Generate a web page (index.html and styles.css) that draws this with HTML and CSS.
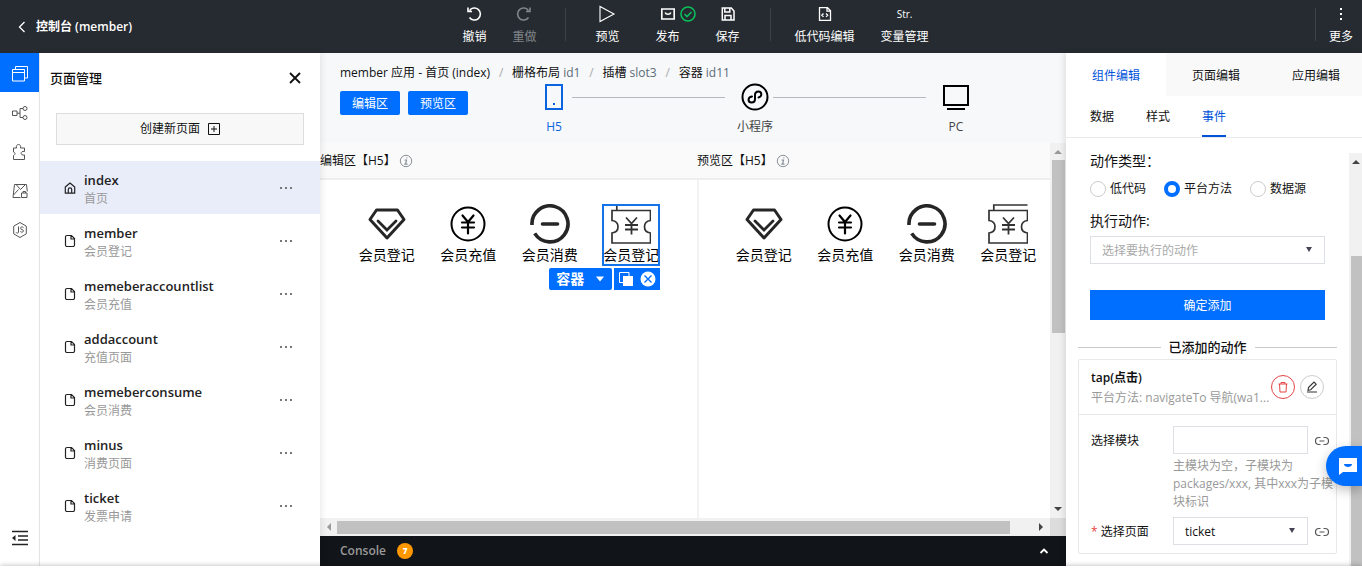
FILE: index.html
```html
<!DOCTYPE html>
<html lang="zh-CN">
<head>
<meta charset="utf-8">
<title>控制台 (member)</title>
<link rel="stylesheet" href="styles.css">
</head>
<body>
<svg class="defs" aria-hidden="true">
  <symbol id="i-file" viewBox="0 0 12 14"><path d="M7.500 1.500H3a1.500 1.500 0 0 0-1.500 1.500v8A1.500 1.500 0 0 0 3 12.500h6a1.500 1.500 0 0 0 1.500-1.500V4.500zM7 1.500V5h3.500" fill="none" stroke="currentColor" stroke-width="1.200"/></symbol>
  <symbol id="i-info" viewBox="0 0 14 14"><circle cx="7" cy="7" r="5.700" fill="none" stroke="currentColor"/><path d="M7.800 3.800h.1M6 6h1.500l-.9 4M5.700 10.200h2.400" fill="none" stroke="currentColor" stroke-width="1.200" stroke-linecap="round"/></symbol>
  <symbol id="i-link" viewBox="0 0 16 12"><path d="M6.500 2.500H5a3.500 3.500 0 0 0 0 7h1.500M9.500 2.500H11a3.500 3.500 0 0 1 0 7H9.500M5.500 6h5" fill="none" stroke="currentColor" stroke-width="1.200"/></symbol>
  <symbol id="i-diamond" viewBox="0 0 40 40"><path d="M9.500 6h21l6.500 9.500L20 34 3 15.500z" fill="none" stroke="#262626" stroke-width="3" stroke-linejoin="round"/><path d="M11 17l9 9 9-9" fill="none" stroke="#262626" stroke-width="2.800" stroke-linecap="round"/></symbol>
  <symbol id="i-coin" viewBox="0 0 40 40"><circle cx="20" cy="20" r="16.500" fill="none" stroke="#000" stroke-width="2"/><path d="M14.500 11.500l5.500 6.500 5.500-6.500M20 18v11.500M14 18.500h12M14 23.500h12" fill="none" stroke="#000" stroke-width="2.200" stroke-linecap="round"/></symbol>
  <symbol id="i-minus" viewBox="0 0 40 40"><path d="M2 21A18 18 0 1 1 4.700 29.400" fill="none" stroke="#262626" stroke-width="3.600"/><path d="M12.500 20h15" stroke="#262626" stroke-width="3.600" stroke-linecap="round"/></symbol>
  <symbol id="i-ticket" viewBox="0 0 40 40"><path d="M5.800 6V1H39.500M1 6.500h38.500v10c-8 1-8 11.500 0 12.500v10H1V29c8-1 8-11.500 0-12.500z" fill="none" stroke="#333" stroke-width="1.700"/><path d="M15 13.500l5.500 6 5.500-6M20.500 19.500v11M14 21h13M14 25.500h13" fill="none" stroke="#333" stroke-width="1.800"/></symbol>
</svg>

<header class="topbar">
  <a class="brand" href="#"><svg width="8" height="12" viewBox="0 0 8 12"><path d="M6.500 1l-5 5 5 5" fill="none" stroke="currentColor" stroke-width="1.300"/></svg>控制台 (member)</a>
  <nav class="tools">
    <div class="tool-group">
      <button class="tool"><svg width="16" height="16" viewBox="0 0 16 16"><path d="M3.600 4.400A6 6 0 1 1 3.500 11.500M2 1.500v4h4" fill="none" stroke="currentColor" stroke-width="1.600"/></svg>撤销</button>
      <button class="tool tool-off" disabled><svg width="16" height="16" viewBox="0 0 16 16"><path d="M12.400 4.400A6 6 0 1 0 12.500 11.500M14 1.500v4h-4" fill="none" stroke="currentColor" stroke-width="1.600"/></svg>重做</button>
    </div>
    <span class="rule"></span>
    <div class="tool-group wide">
      <button class="tool"><svg width="18" height="18" viewBox="0 0 18 18"><path d="M2 1.500v15l14-7.500z" fill="none" stroke="currentColor" stroke-width="1.100"/></svg>预览</button>
      <button class="tool"><svg width="16" height="16" viewBox="0 0 16 16"><path d="M1.800 3h12.400v10H1.800zM5.200 6.500c.8 2.300 4.800 2.300 5.600 0" fill="none" stroke="currentColor" stroke-width="1.600"/></svg>发布
        <svg class="ok" width="16" height="16" viewBox="0 0 16 16"><circle cx="8" cy="8" r="7" fill="none" stroke="#0abf5b" stroke-width="1.600"/><path d="M4.500 8l2.500 2.500L11.500 6" fill="none" stroke="#0abf5b" stroke-width="1.600"/></svg></button>
      <button class="tool"><svg width="16" height="16" viewBox="0 0 16 16"><path d="M2.300 2h9l2.700 3v9H2.300zM4.800 2v4h5V2M5 14V9.500h6V14" fill="none" stroke="currentColor" stroke-width="1.500"/></svg>保存</button>
    </div>
    <span class="rule"></span>
    <div class="tool-group">
      <button class="tool"><svg width="16" height="16" viewBox="0 0 16 16"><path d="M2.500 1.700h8l3 3v9.600h-11zM10 1.700v3.500h3.500M6.500 7.500L4.800 9.200l1.700 1.700M9 7.500l1.700 1.700L9 10.900" fill="none" stroke="currentColor" stroke-width="1.300"/></svg>低代码编辑</button>
      <button class="tool"><span class="str">Str.</span>变量管理</button>
    </div>
  </nav>
  <div class="more">
    <span class="rule"></span>
    <button class="tool"><svg width="16" height="16" viewBox="0 0 16 16"><path d="M7 2h2v2H7zM7 7h2v2H7zM7 12h2v2H7z" fill="currentColor"/></svg>更多</button>
  </div>
</header>

<div class="workspace">
  <nav class="rail">
    <button class="rail-item on" aria-label="页面"><svg width="18" height="18" viewBox="0 0 18 18"><path d="M4.500 4V1.500h12V13H13.500M1.500 4.500h12v11.500h-12zM1.500 7.500h12" fill="none" stroke="currentColor"/></svg></button>
    <button class="rail-item" aria-label="流程"><svg width="18" height="18" viewBox="0 0 18 18"><path d="M1.500 7h4.500v4.500H1.500zM6 9.200h3M12 4.500H9V13.500h3" fill="none" stroke="currentColor"/><circle cx="14" cy="4.500" r="2" fill="none" stroke="currentColor"/><circle cx="14" cy="13.500" r="2" fill="none" stroke="currentColor"/></svg></button>
    <button class="rail-item" aria-label="组件"><svg width="18" height="18" viewBox="0 0 18 18"><path d="M2.500 5h3c-1.200-4.700 5.200-4.700 4 0h4v3.500c-4.500-1-4.500 4.500 0 3.500v4.500h-11v-4c2-1 2-3 0-3.500z" fill="none" stroke="currentColor"/></svg></button>
    <button class="rail-item" aria-label="素材"><svg width="18" height="18" viewBox="0 0 18 18"><path d="M9.500 15.500H2l1.500-13h12l.8 7M5.500 3l4 4.500L14 3M2.500 13l5-5.500" fill="none" stroke="currentColor"/><path d="M10.500 11h5.500v4.500h-5.500zM12 11V9.500h2.500V11" fill="none" stroke="currentColor"/></svg></button>
    <button class="rail-item" aria-label="脚本"><svg width="18" height="18" viewBox="0 0 18 18"><path d="M9 1.500l6.300 3.700v7.600L9 16.500l-6.300-3.700V5.200z" fill="none" stroke="currentColor"/><path d="M7.500 5.500v5.500c0 1.500-2 1.500-2.500.3M12.500 6.500c-1-1-3-.7-3 .8s3 1 3 2.500-2.300 1.800-3.200.7" fill="none" stroke="currentColor"/></svg></button>
    <button class="rail-item last" aria-label="收起"><svg width="18" height="16" viewBox="0 0 18 16"><path d="M1 1.500h16M7 6h10M7 10h10M1 14.500h16" stroke="#222" stroke-width="1.600"/><path d="M4.500 5v6L1 8z" fill="#222"/></svg></button>
  </nav>

  <aside class="pages">
    <div class="pages-head"><h2>页面管理</h2><button class="close" aria-label="关闭"><svg width="12" height="12" viewBox="0 0 12 12"><path d="M1 1l10 10M11 1L1 11" stroke="#111" stroke-width="1.800"/></svg></button></div>
    <button class="create">创建新页面<svg width="12" height="12" viewBox="0 0 12 12"><path d="M.5.500h11v11H.5zM6 3v6M3 6h6" fill="none" stroke="currentColor"/></svg></button>
    <ul class="page-list">
      <li class="page on"><svg width="12" height="14" viewBox="0 0 12 14"><path d="M1.300 6L6 2l4.700 4v6.200H1.300zM4.300 12V8.500a1.700 1.700 0 0 1 3.400 0V12" fill="none" stroke="currentColor" stroke-width="1.200" stroke-linejoin="round"/></svg><div class="page-text"><b>index</b><span>首页</span></div><button class="dots" aria-label="更多"><i></i><i></i><i></i></button></li>
      <li class="page"><svg width="12" height="14"><use href="#i-file"/></svg><div class="page-text"><b>member</b><span>会员登记</span></div><button class="dots" aria-label="更多"><i></i><i></i><i></i></button></li>
      <li class="page"><svg width="12" height="14"><use href="#i-file"/></svg><div class="page-text"><b>memeberaccountlist</b><span>会员充值</span></div><button class="dots" aria-label="更多"><i></i><i></i><i></i></button></li>
      <li class="page"><svg width="12" height="14"><use href="#i-file"/></svg><div class="page-text"><b>addaccount</b><span>充值页面</span></div><button class="dots" aria-label="更多"><i></i><i></i><i></i></button></li>
      <li class="page"><svg width="12" height="14"><use href="#i-file"/></svg><div class="page-text"><b>memeberconsume</b><span>会员消费</span></div><button class="dots" aria-label="更多"><i></i><i></i><i></i></button></li>
      <li class="page"><svg width="12" height="14"><use href="#i-file"/></svg><div class="page-text"><b>minus</b><span>消费页面</span></div><button class="dots" aria-label="更多"><i></i><i></i><i></i></button></li>
      <li class="page"><svg width="12" height="14"><use href="#i-file"/></svg><div class="page-text"><b>ticket</b><span>发票申请</span></div><button class="dots" aria-label="更多"><i></i><i></i><i></i></button></li>
    </ul>
  </aside>

  <main class="stage">
    <div class="stage-head">
      <div class="crumbs"><span>member 应用 - 首页 (index)</span><i>/</i><span>栅格布局 <em>id1</em></span><i>/</i><span>插槽 <em>slot3</em></span><i>/</i><span>容器 <em>id11</em></span></div>
      <div class="modes">
        <div class="mode-buttons"><button>编辑区</button><button>预览区</button></div>
        <div class="devices">
          <div class="device on"><svg width="28" height="28" viewBox="0 0 28 28"><path d="M6 2h16v24H6z" fill="none" stroke="currentColor" stroke-width="2"/><path d="M13 20h2v2h-2z" fill="currentColor"/></svg><span>H5</span></div>
          <span class="wire"></span>
          <div class="device"><svg width="28" height="28" viewBox="0 0 28 28"><circle cx="14" cy="14" r="12.500" fill="none" stroke="#000" stroke-width="2"/><path d="M11 13.500c-5 1-4 6-.5 6 2.500 0 3.500-1.500 3.500-3.500v-4c0-2 1.500-3.500 3.500-3.500 3.500 0 4 5 0 6" fill="none" stroke="#000" stroke-width="2" stroke-linecap="round"/></svg><span>小程序</span></div>
          <span class="wire"></span>
          <div class="device"><svg width="28" height="28" viewBox="0 0 28 28"><path d="M2 3h24v19H2z" fill="none" stroke="#000" stroke-width="2"/><path d="M5 26h18" stroke="#000" stroke-width="2"/></svg><span>PC</span></div>
        </div>
      </div>
    </div>

    <div class="scroller">
      <div class="views">
        <section class="view">
          <h3>编辑区【H5】<svg width="14" height="14"><use href="#i-info"/></svg></h3>
          <div class="board">
            <div class="cell"><div class="entry"><svg width="40" height="40"><use href="#i-diamond"/></svg><span>会员登记</span></div></div>
            <div class="cell"><div class="entry"><svg width="40" height="40"><use href="#i-coin"/></svg><span>会员充值</span></div></div>
            <div class="cell"><div class="entry"><svg width="40" height="40"><use href="#i-minus"/></svg><span>会员消费</span></div></div>
            <div class="cell"><div class="entry picked"><svg width="40" height="40"><use href="#i-ticket"/></svg><span>会员登记</span>
              <div class="handle">
                <button class="kind">容器<svg width="10" height="6" viewBox="0 0 10 6"><path d="M1 .5h8L5 5.500z" fill="#fff"/></svg></button>
                <div class="acts">
                  <button aria-label="复制"><svg width="16" height="16" viewBox="0 0 16 16"><path d="M1.500 1.500h9.500v10H1.500z" fill="none" stroke="#fff"/><path d="M5 5h10v10H5z" fill="#fff"/></svg></button>
                  <button aria-label="删除"><svg width="16" height="16" viewBox="0 0 16 16"><circle cx="8" cy="8" r="7.500" fill="#fff"/><path d="M4.500 4.500l7 7M11.500 4.500l-7 7" stroke="#006eff" stroke-width="1.400"/></svg></button>
                </div>
              </div></div></div>
          </div>
        </section>
        <section class="view">
          <h3>预览区【H5】<svg width="14" height="14"><use href="#i-info"/></svg></h3>
          <div class="board">
            <div class="cell"><div class="entry"><svg width="40" height="40"><use href="#i-diamond"/></svg><span>会员登记</span></div></div>
            <div class="cell"><div class="entry"><svg width="40" height="40"><use href="#i-coin"/></svg><span>会员充值</span></div></div>
            <div class="cell"><div class="entry"><svg width="40" height="40"><use href="#i-minus"/></svg><span>会员消费</span></div></div>
            <div class="cell"><div class="entry"><svg width="40" height="40"><use href="#i-ticket"/></svg><span>会员登记</span></div></div>
          </div>
        </section>
      </div>
      <div class="vbar"><span class="up dim"></span><span class="vthumb"></span><span class="down"></span></div>
      <div class="hbar"><span class="left dim"></span><span class="hthumb"></span><span class="right"></span></div>
      <div class="corner"></div>
    </div>

    <footer class="console"><span>Console</span><b>7</b><button aria-label="展开"><svg width="10" height="8" viewBox="0 0 10 8"><path d="M1.500 6L5 2.500 8.500 6" fill="none" stroke="#fff" stroke-width="1.800"/></svg></button></footer>
  </main>

  <aside class="props">
    <div class="tabs" role="tablist"><button class="on" role="tab">组件编辑</button><button role="tab">页面编辑</button><button role="tab">应用编辑</button></div>
    <div class="subtabs" role="tablist"><button role="tab">数据</button><button role="tab">样式</button><button class="on" role="tab">事件</button></div>
    <div class="props-body">
      <form class="form">
        <div class="block">
          <div class="caption">动作类型：</div>
          <div class="radios">
            <label><input type="radio" name="kind">低代码</label>
            <label><input type="radio" name="kind" checked>平台方法</label>
            <label><input type="radio" name="kind">数据源</label>
          </div>
          <label class="caption second" for="act">执行动作:</label>
          <div class="pick"><select id="act" class="empty"><option>选择要执行的动作</option></select></div>
          <button class="submit" type="button">确定添加</button>
        </div>
        <div class="divider">已添加的动作</div>
        <div class="card">
          <div class="card-head">
            <div class="card-text"><b>tap(点击)</b><span>平台方法: navigateTo 导航(wa1...</span></div>
            <button class="round red" type="button" aria-label="删除"><svg width="12" height="12" viewBox="0 0 12 12"><path d="M1.500 3h9M4 3V1.500h4V3M2.500 3l.5 8h6l.5-8" fill="none" stroke="currentColor"/></svg></button>
            <button class="round" type="button" aria-label="编辑"><svg width="12" height="12" viewBox="0 0 12 12"><path d="M2.500 6.500L8 1l2.200 2.200L4.700 8.700l-2.700.5zM1 11h10" fill="none" stroke="currentColor" stroke-width="1.100"/></svg></button>
          </div>
          <div class="field">
            <label for="mod">选择模块</label>
            <div><input id="mod" type="text"><p>主模块为空，子模块为 packages/xxx, 其中xxx为子模块标识</p></div>
            <svg width="16" height="12"><use href="#i-link"/></svg>
          </div>
          <div class="field">
            <label for="pg"><i>*</i> 选择页面</label>
            <div class="pick"><select id="pg"><option>ticket</option></select></div>
            <svg width="16" height="12"><use href="#i-link"/></svg>
          </div>
        </div>
      </form>
      <div class="pbar"><span class="up"></span><span class="pthumb"></span></div>
    </div>
  </aside>
</div>
<div class="edge"></div>
<button class="chat" aria-label="客服"><svg width="20" height="20" viewBox="0 0 20 20"><path d="M1 2h18v14H5l-4 3z" fill="#fff"/><path d="M6 8h8c0 4-8 4-8 0z" fill="#006eff"/></svg></button>
</body>
</html>
```

FILE: styles.css
```css
* { box-sizing: border-box; }
body {
  margin: 0;
  height: 100vh;
  display: flex;
  flex-direction: column;
  overflow: hidden;
  background: #fff;
  color: #111;
  font: 12px/18px "Open Sans", "Noto Sans CJK SC", sans-serif;
}
button, input, select { font: inherit; color: inherit; }
button { border: 0; padding: 0; background: none; cursor: pointer; }
svg { display: block; flex: none; }
i, em { font-style: normal; }
h2, h3, p, ul { margin: 0; padding: 0; }
.defs { position: absolute; width: 0; height: 0; }

/* top bar */
.topbar { flex: none; display: flex; height: 53px; background: #262b31; color: #fff; }
.brand {
  flex: 0 0 33%;
  display: flex;
  align-items: center;
  gap: 10px;
  padding-left: 18px;
  color: #fff;
  font-weight: 600;
  text-decoration: none;
}
.tools, .more, .tool-group { display: flex; }
.tool {
  position: relative;
  display: grid;
  grid-template-rows: 28px 18px;
  place-items: center;
  padding: 0 13px 8px;
}
.wide .tool { padding: 0 18px 8px; }
.tool-off { color: #82868a; }
.rule { width: 1px; height: 33px; margin: 8px 11px 8px 12px; background: #3d4248; }
.tools .tool-group:first-child { padding-right: 4px; }
.str { font-size: 10px; }
.ok { position: absolute; top: 6px; right: 2px; }
.more { margin-left: auto; }
.more .rule { margin: 8px 0; }
.more .tool { padding: 0 9px 8px 13px; }

/* workspace */
.workspace { flex: 1; display: flex; min-height: 0; }
.rail { flex: 0 0 40px; display: flex; flex-direction: column; border-right: 1px solid #e8e8e8; }
.rail-item { display: grid; place-items: center; height: 39px; padding-top: 2px; color: #555; }
.rail-item.on { background: #006eff; color: #fff; }
.rail-item.last { margin-top: auto; margin-bottom: 10px; }

.pages { flex: 0 0 280px; z-index: 1; background: #fff; box-shadow: 2px 0 6px rgba(0, 0, 0, .08); }
.pages-head { display: flex; align-items: center; justify-content: space-between; height: 50px; padding: 0 19px 0 10px; }
.pages-head h2 { font-size: 13px; line-height: 20px; font-weight: 500; }
.create {
  display: flex;
  align-items: center;
  justify-content: center;
  gap: 8px;
  width: calc(100% - 32px);
  height: 32px;
  margin: 10px 16px 16px;
  border: 1px solid #ddd;
  background: #f8f8f8;
}
.page-list { list-style: none; }
.page { display: flex; align-items: center; gap: 8px; height: 53px; padding: 0 28px 0 24px; color: #222; }
.page.on { background: #e9edfa; }
.page-text { flex: 1; display: flex; flex-direction: column; padding-top: 2px; }
.page-text b { font-size: 13px; font-weight: 600; line-height: 20px; }
.page-text span { color: #999; }
.dots { display: flex; gap: 3px; padding: 4px 0; }
.dots i { width: 2px; height: 2px; background: #777; }

/* stage */
.stage { flex: 1; min-width: 0; display: flex; flex-direction: column; }
.stage-head { flex: none; height: 90px; padding-top: 11px; background: #f6f8fa; }
.crumbs { display: flex; padding-left: 20px; white-space: nowrap; }
.crumbs i { width: 22px; text-align: center; color: #aaa; }
.crumbs em { color: #5c6b77; }
.modes { display: flex; padding: 1px 92px 0 20px; }
.mode-buttons { display: flex; gap: 8px; padding-top: 8px; }
.mode-buttons button { width: 60px; height: 24px; padding-top: 2px; border-radius: 2px; background: #006eff; color: #fff; }
.devices { flex: 1; display: flex; margin-left: 68px; }
.device { width: 36px; display: flex; flex-direction: column; align-items: center; gap: 7px; color: #444; white-space: nowrap; }
.device.on { color: #0a64e0; }
.wire { flex: 1; height: 1px; margin: 14px 12px 0 0; background: #b5b9bd; }

.scroller { flex: 1; min-height: 0; display: grid; grid-template: minmax(0, 1fr) 18px / minmax(0, 1fr) 16px; }
.views { display: flex; overflow: hidden; }
.view { flex: 0 0 377px; }
.view + .view { box-shadow: inset 2px 0 #f2f2f2; }
.view h3 {
  display: flex;
  align-items: center;
  gap: 3px;
  height: 37px;
  border-bottom: 2px solid #eee;
  background: #fafafa;
  font-size: 12px;
  font-weight: 400;
}
.view h3 svg { color: #8a9299; }
.board { display: grid; grid-template-columns: repeat(4, 1fr); padding: 24px 25px 0 26px; }
.cell { display: flex; justify-content: center; }
.entry { position: relative; display: flex; flex-direction: column; align-items: center; font-size: 14px; line-height: 22px; color: #000; white-space: nowrap; }
.picked::after { content: ""; position: absolute; inset: 0 -1px; border: 2px solid #1473e8; }
.handle { position: absolute; top: 64px; right: -1px; z-index: 1; display: flex; gap: 2px; }
.handle button { display: flex; align-items: center; }
.kind { gap: 11px; height: 22px; padding: 0 7px; border-radius: 2px; background: #006eff; color: #fff; font-weight: 700; }
.acts { display: flex; gap: 6px; height: 22px; padding: 0 4px; background: #006eff; }

/* scroll bars */
.vbar, .pbar { display: flex; flex-direction: column; align-items: center; background: #f1f1f1; }
.up, .down, .left, .right { border: 4px solid transparent; color: #444; }
.up { border-top: 0; border-bottom-color: currentColor; }
.down { border-bottom: 0; border-top-color: currentColor; }
.left { border-left: 0; border-right-color: currentColor; }
.right { border-right: 0; border-left-color: currentColor; }
.dim { color: #999; }
.vbar { padding: 7px 0; }
.vthumb { flex: 0 0 48%; width: 13px; margin: 6px 0 auto; background: #c1c1c1; }
.hbar { display: flex; align-items: center; padding: 0 7px; background: #f1f1f1; }
.hthumb { flex: 0 0 94%; height: 13px; margin: 0 auto 0 6px; background: #c1c1c1; }
.corner { background: #dcdcdc; }

.console { flex: none; display: flex; align-items: center; gap: 11px; height: 30px; padding: 0 17px 0 20px; background: #111418; color: #999; font-weight: 600; }
.console b { width: 16px; height: 16px; border-radius: 8px; background: #ff9800; color: #fff; font-size: 8px; line-height: 16px; text-align: center; }
.console button { margin-left: auto; }

/* properties */
.props { flex: 0 0 296px; z-index: 1; display: flex; flex-direction: column; overflow: hidden; background: #fff; box-shadow: -2px 0 6px rgba(0, 0, 0, .1); }
.tabs { flex: none; display: flex; height: 43px; }
.tabs button { flex: 0 0 100px; padding-top: 2px; background: #f9f9fa; }
.tabs .on { background: #fff; color: #0052d9; }
.subtabs { flex: none; display: flex; gap: 32px; height: 42px; padding-left: 24px; border-bottom: 1px solid #e8eaec; }
.subtabs button { padding-top: 3px; border-bottom: 2px solid transparent; }
.subtabs .on { border-color: #0052d9; color: #0052d9; }
.props-body { flex: 1; min-height: 0; display: flex; }
.form { flex: 1; padding: 12px 12px 0; overflow: hidden; }
.block { padding: 0 12px; }
.caption { display: block; font-size: 14px; line-height: 22px; }
.radios { display: flex; gap: 18px; padding: 8px 0 12px; white-space: nowrap; }
.radios label { display: flex; align-items: center; gap: 4px; }
.radios input { appearance: none; width: 16px; height: 16px; margin: 0; border: 1px solid #ccc; border-radius: 50%; }
.radios input:checked { border: 4px solid #006eff; }
.second { margin-bottom: 4px; }
.pick { position: relative; }
.pick::after { content: ""; position: absolute; top: 11px; right: 13px; border: 3px solid transparent; border-top: 5px solid #445; border-bottom: 0; pointer-events: none; }
select, input[type="text"] { appearance: none; display: block; width: 100%; height: 28px; padding: 2px 11px 0; border: 1px solid #dcdfe3; border-radius: 0; background: #fff; }
select.empty { color: #aaa; }
.submit { width: 100%; height: 30px; margin-top: 26px; padding-top: 2px; background: #006eff; color: #fff; }
.divider { display: flex; align-items: center; gap: 8px; margin: 18px 0 2px; font-size: 13px; line-height: 19px; font-weight: 500; }
.divider::before, .divider::after { content: ""; flex: 1; height: 1px; background: #c8c8c8; }
.card { border: 1px solid #e8e8e8; border-radius: 2px; padding-bottom: 7px; }
.card-head { display: flex; align-items: center; gap: 5px; height: 55px; padding: 0 12px; border-bottom: 1px solid #e8e8e8; }
.card-text { flex: 1; display: flex; flex-direction: column; min-width: 0; padding-top: 2px; line-height: 20px; white-space: nowrap; }
.card-text b { font-weight: 600; }
.card-text span { color: #999; }
.round { flex: none; display: grid; place-items: center; width: 24px; height: 24px; border: 1px solid #ccc; border-radius: 50%; color: #333; }
.red { border-color: #e54545; color: #e54545; }
.field { display: grid; grid-template-columns: 76px minmax(0, 1fr) 16px; column-gap: 6px; padding: 11px 6px 0 12px; }
.field + .field { padding-top: 6px; }
.field > label { line-height: 29px; }
.field label i { color: #e54545; }
.field > svg { margin-top: 9px; color: #555; }
.field p { width: 162px; padding-top: 3px; color: #999; }

.pbar { flex: 0 0 13px; margin-top: 15px; padding-top: 7px; }
.pthumb { flex: 1; width: 11px; margin: 92px 0 0 2px; background: #c1c1c1; }
.edge { flex: none; z-index: 2; height: 3px; background: #fff; box-shadow: 0 0 5px rgba(0, 0, 0, .35); }
.chat {
  position: fixed;
  right: 0;
  bottom: 83px;
  z-index: 3;
  width: 36px;
  height: 40px;
  padding-left: 12px;
  border-radius: 20px 0 0 20px;
  background: #006eff;
  box-shadow: 0 4px 12px rgba(0, 0, 0, .25);
}
```
